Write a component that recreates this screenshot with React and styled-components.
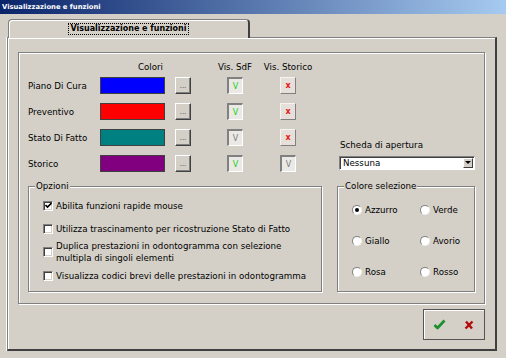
import { Fragment } from "react";
import styled, { createGlobalStyle, css } from "styled-components";

const GlobalStyle = createGlobalStyle`
  html, body {
    margin: 0;
    padding: 0;
    background: #d4d0c8;
  }
  body {
    font-family: "DejaVu Sans", Verdana, sans-serif;
    font-size: 8.7px;
    color: #000;
  }
`;

const cols = "72px 75px 16px 26px 36px 70px";

const Window = styled.div`
  width: 506px;
  height: 358px;
  display: flex;
  flex-direction: column;
  background: #d4d0c8;
  overflow: hidden;
`;

const TitleBar = styled.div`
  height: 14px;
  flex: none;
  display: flex;
  align-items: center;
  padding-left: 2px;
  background: linear-gradient(to right, #0a246a, #a6caf0);
  color: #fff;
  font-weight: bold;
  font-size: 6.8px;
`;

const Body = styled.div`
  flex: 1;
  min-height: 0;
  display: flex;
  flex-direction: column;
  padding: 5px 9px 7px 7px;
`;

const TabStrip = styled.div`
  display: flex;
  padding-left: 1px;
  height: 18px;
  flex: none;
`;

const Tab = styled.div`
  width: 242px;
  box-sizing: border-box;
  display: flex;
  align-items: center;
  justify-content: center;
  background: #d4d0c8;
  border: 1px solid #808080;
  border-bottom: none;
  border-right: 2px solid #404040;
  border-radius: 4px 4px 0 0;
  box-shadow: inset 1px 1px 0 #fff;
  margin-bottom: -1px;
  position: relative;
  z-index: 1;
  font-weight: bold;
  font-size: 8px;
`;

const FocusText = styled.span`
  border: 1px dotted #000;
  padding: 0 1px;
  line-height: 10px;
`;

const TabPanel = styled.div`
  flex: 1;
  min-height: 0;
  display: flex;
  flex-direction: column;
  border-left: 1px solid #808080;
  border-top: 1px solid #808080;
  border-right: 2px solid #404040;
  border-bottom: 2px solid #404040;
  box-shadow: -1px 0 0 #fff, inset 1px 1px 0 #fff;
  padding: 14px 10px 9px 10px;
`;

const InnerGroup = styled.div`
  flex: 1;
  display: flex;
  flex-direction: column;
  border: 1px solid #808080;
  box-shadow: inset 1px 1px 0 #fff, 1px 1px 0 #fff;
  padding: 9px 8px 10px 9px;
`;

const TopSection = styled.div`
  display: flex;
  justify-content: space-between;
`;

const TableWrap = styled.div`
  display: flex;
  flex-direction: column;
  gap: 5px;
`;

const HeaderGrid = styled.div`
  display: grid;
  grid-template-columns: ${cols};
  height: 10px;
  line-height: 10px;
`;

const HeaderCell = styled.div`
  grid-column: ${({ $col }) => $col};
  text-align: ${({ $align }) => $align || "center"};
  padding-right: ${({ $pr }) => $pr || 0}px;
  white-space: nowrap;
`;

const ColorGrid = styled.div`
  display: grid;
  grid-template-columns: ${cols};
  grid-auto-rows: 17px;
  row-gap: 9px;
  align-items: center;
`;

const RowLabel = styled.div`
  grid-column: 1;
  white-space: nowrap;
  line-height: 10px;
`;

const Swatch = styled.div`
  grid-column: 2;
  width: 65px;
  height: 17px;
  box-sizing: border-box;
  border: 1px solid #404040;
  background: ${({ $color }) => $color};
`;

const DotsButton = styled.div`
  grid-column: 3;
  width: 16px;
  height: 17px;
  box-sizing: border-box;
  display: flex;
  align-items: flex-end;
  justify-content: center;
  padding-bottom: 3px;
  border: 1px solid;
  border-color: #fff #404040 #404040 #fff;
  box-shadow: inset -1px -1px 0 #808080;
  font-size: 7px;
  line-height: 7px;
  color: #404040;
`;

const Toggle = styled.div`
  grid-column: ${({ $col }) => $col};
  justify-self: center;
  width: 16px;
  height: 17px;
  box-sizing: border-box;
  display: flex;
  align-items: center;
  justify-content: center;
  font-size: 8px;
  ${({ $state }) =>
    $state === "x"
      ? css`
          background: #e6dfda;
          border: 1px solid;
          border-color: #f6f4f0 #808080 #808080 #f6f4f0;
          color: #e81818;
          font-weight: bold;
        `
      : css`
          background: #ebe9e5;
          border-left: 2px solid #808080;
          border-top: 2px solid #808080;
          border-right: 1px solid #fff;
          border-bottom: 1px solid #fff;
          color: ${$state === "on" ? "#10d010" : "#7a7a7a"};
        `}
`;

const OpenBlock = styled.div`
  width: 137px;
  align-self: flex-end;
  display: flex;
  flex-direction: column;
  gap: 6px;
  margin-bottom: 2px;
`;

const SmallLabel = styled.div`
  line-height: 10px;
  padding-left: 1px;
`;

const Select = styled.div`
  width: 136px;
  height: 14px;
  box-sizing: border-box;
  display: flex;
  align-items: center;
  padding: 0 1px 0 3px;
  background: #fff;
  border: 1px solid;
  border-color: #808080 #fff #fff #808080;
  box-shadow: inset 1px 1px 0 #404040;
`;

const DropButton = styled.span`
  margin-left: auto;
  width: 10px;
  height: 10px;
  box-sizing: border-box;
  display: flex;
  align-items: center;
  justify-content: center;
  background: #d4d0c8;
  border: 1px solid;
  border-color: #fff #404040 #404040 #fff;
`;

const BottomSection = styled.div`
  display: flex;
  gap: 15px;
  margin-top: 9px;
`;

const Group = styled.fieldset`
  margin: 0;
  min-inline-size: 0;
  width: ${({ $w }) => $w}px;
  box-sizing: border-box;
  border: 1px solid #808080;
  box-shadow: inset 1px 1px 0 #fff, 1px 1px 0 #fff;
  padding: 3px 4px 4px 14px;
`;

const Legend = styled.legend`
  padding: 0 1px;
  margin-left: -8px;
  line-height: 10px;
  background: #d4d0c8;
`;

const OptionList = styled.div`
  display: flex;
  flex-direction: column;
`;

const Option = styled.div`
  min-height: 23px;
  display: flex;
  align-items: center;
  gap: 3px;
  line-height: 12px;
`;

const CheckBox = styled.span`
  width: 10px;
  height: 10px;
  flex: none;
  box-sizing: border-box;
  display: flex;
  align-items: center;
  justify-content: center;
  background: #fff;
  border: 1px solid;
  border-color: #808080 #fff #fff #808080;
  box-shadow: inset 1px 1px 0 #404040, inset -1px -1px 0 #d4d0c8;
`;

const RadioGrid = styled.div`
  display: grid;
  grid-template-columns: 68px 60px;
  grid-auto-rows: 31px;
  align-items: center;
`;

const RadioItem = styled.div`
  display: flex;
  align-items: center;
  gap: 3px;
`;

const Radio = styled.span`
  width: 10px;
  height: 10px;
  flex: none;
  box-sizing: border-box;
  display: flex;
  align-items: center;
  justify-content: center;
  border-radius: 50%;
  background: #fff;
  border: 1px solid;
  border-color: #808080 #f0f0f0 #f0f0f0 #808080;
  &::after {
    content: "";
    width: 4px;
    height: 4px;
    border-radius: 50%;
    background: ${({ $on }) => ($on ? "#000" : "transparent")};
  }
`;

const Footer = styled.div`
  display: flex;
  justify-content: flex-end;
  margin-top: 5px;
`;

const ButtonPanel = styled.div`
  width: 62px;
  height: 31px;
  box-sizing: border-box;
  display: flex;
  border: 1px solid #555;
  box-shadow: inset 1px 1px 0 #fff;
`;

const IconButton = styled.div`
  flex: 1;
  display: flex;
  align-items: center;
  justify-content: center;
`;

const rows = [
  { label: "Piano Di Cura", color: "#0000ff", sdf: "on", sto: "x" },
  { label: "Preventivo", color: "#ff0000", sdf: "on", sto: "x" },
  { label: "Stato Di Fatto", color: "#008080", sdf: "off", sto: "x" },
  { label: "Storico", color: "#800080", sdf: "on", sto: "off" },
];

const options = [
  { text: "Abilita funzioni rapide mouse", checked: true },
  { text: "Utilizza trascinamento per ricostruzione Stato di Fatto" },
  {
    text: (
      <>
        Duplica prestazioni in odontogramma con selezione
        <br />
        multipla di singoli elementi
      </>
    ),
  },
  { text: "Visualizza codici brevi delle prestazioni in odontogramma" },
];

const radios = [
  ["Azzurro", true],
  ["Verde"],
  ["Giallo"],
  ["Avorio"],
  ["Rosa"],
  ["Rosso"],
];

export default function App() {
  return (
    <Window>
      <GlobalStyle />
      <TitleBar>Visualizzazione e funzioni</TitleBar>
      <Body>
        <TabStrip>
          <Tab>
            <FocusText>Visualizzazione e funzioni</FocusText>
          </Tab>
        </TabStrip>
        <TabPanel>
          <InnerGroup>
            <TopSection>
              <TableWrap>
                <HeaderGrid>
                  <HeaderCell $col="2" $align="right" $pr={12}>
                    Colori
                  </HeaderCell>
                  <HeaderCell $col="5">Vis. SdF</HeaderCell>
                  <HeaderCell $col="6">Vis. Storico</HeaderCell>
                </HeaderGrid>
                <ColorGrid>
                  {rows.map((r) => (
                    <Fragment key={r.label}>
                      <RowLabel>{r.label}</RowLabel>
                      <Swatch $color={r.color} />
                      <DotsButton>...</DotsButton>
                      <Toggle $col="5" $state={r.sdf}>
                        {r.sdf === "x" ? "x" : "V"}
                      </Toggle>
                      <Toggle $col="6" $state={r.sto}>
                        {r.sto === "x" ? "x" : "V"}
                      </Toggle>
                    </Fragment>
                  ))}
                </ColorGrid>
              </TableWrap>
              <OpenBlock>
                <SmallLabel>Scheda di apertura</SmallLabel>
                <Select>
                  Nessuna
                  <DropButton>
                    <svg width="6" height="4" viewBox="0 0 6 4">
                      <path d="M0 0 H6 L3 3 Z" fill="#000" />
                    </svg>
                  </DropButton>
                </Select>
              </OpenBlock>
            </TopSection>
            <BottomSection>
              <Group $w={294}>
                <Legend>Opzioni</Legend>
                <OptionList>
                  {options.map((o, i) => (
                    <Option key={i}>
                      <CheckBox>
                        {o.checked && (
                          <svg width="7" height="7" viewBox="0 0 7 7">
                            <path d="M0.5 3 L2.5 5 L6.5 1" stroke="#000" strokeWidth="1.6" fill="none" />
                          </svg>
                        )}
                      </CheckBox>
                      <span>{o.text}</span>
                    </Option>
                  ))}
                </OptionList>
              </Group>
              <Group $w={138}>
                <Legend>Colore selezione</Legend>
                <RadioGrid>
                  {radios.map(([name, on]) => (
                    <RadioItem key={name}>
                      <Radio $on={on} />
                      <span>{name}</span>
                    </RadioItem>
                  ))}
                </RadioGrid>
              </Group>
            </BottomSection>
          </InnerGroup>
          <Footer>
            <ButtonPanel>
              <IconButton>
                <svg width="13" height="11" viewBox="0 0 13 11">
                  <path d="M1.5 6 L4.5 9 L11.5 1.5" stroke="#1c8e2c" strokeWidth="2.6" fill="none" strokeLinejoin="round" />
                </svg>
              </IconButton>
              <IconButton>
                <svg width="10" height="10" viewBox="0 0 10 10">
                  <path d="M2 1.5 L8 8.5 M8.5 1.5 L1.5 8.5" stroke="#b40a0a" strokeWidth="2.4" fill="none" />
                </svg>
              </IconButton>
            </ButtonPanel>
          </Footer>
        </TabPanel>
      </Body>
    </Window>
  );
}
